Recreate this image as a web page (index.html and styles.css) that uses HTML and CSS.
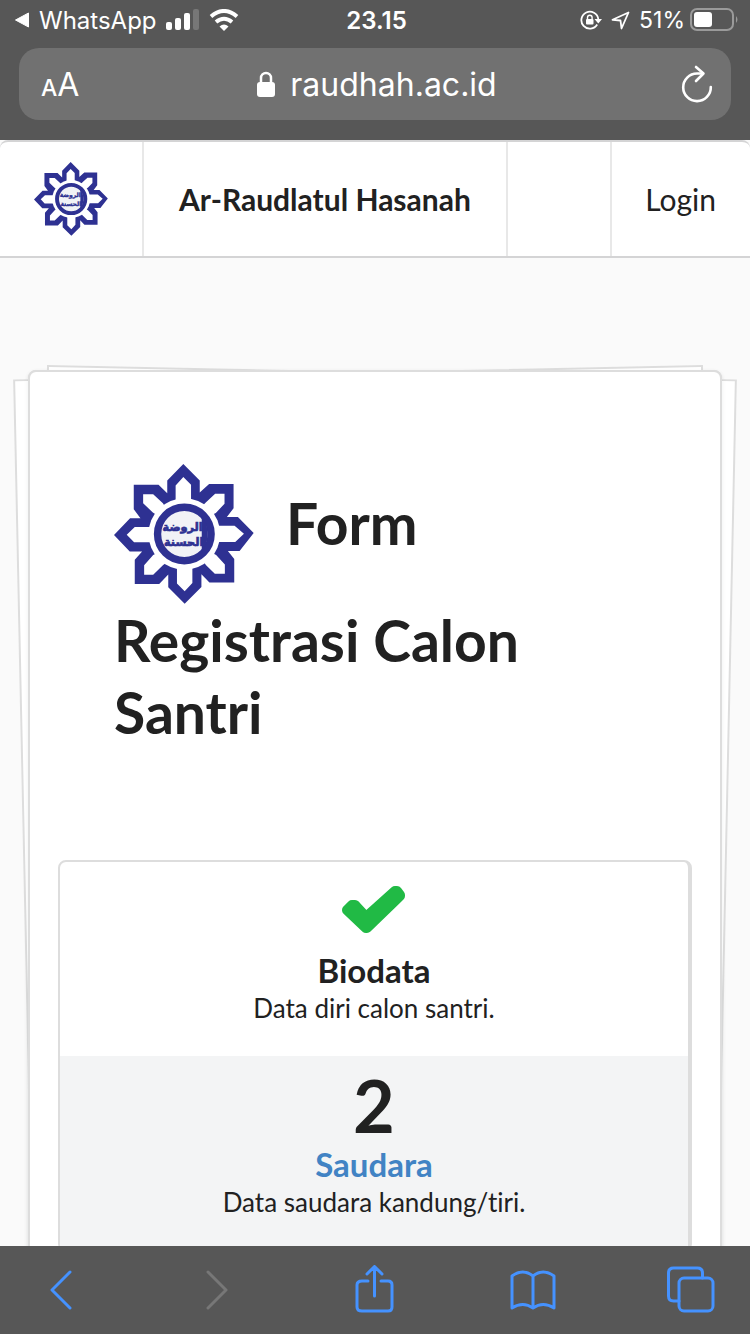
FILE: index.html
```html
<!DOCTYPE html>
<html lang="id">
<head>
<meta charset="utf-8">
<meta name="viewport" content="width=device-width, initial-scale=1">
<title>Ar-Raudlatul Hasanah</title>
<link rel="stylesheet" href="styles.css">
</head>
<body>
<svg class="defs" aria-hidden="true">
  <symbol id="emblem" viewBox="28 28 418 418">
    <path fill="#2e3192" d="M235 28L284 77V113L312 88H385V160L365 186H398L445 234L403 288H368L387 312V382H313L289 357V395L239 445L190 396V358L163 386H90V314L112 289H75L28 240L76 190H107L87 163V90H161L187 115V77Z"/>
    <g fill="#fff">
      <circle cx="238" cy="237" r="107"/>
      <path d="M235 67L258 90V150H212V92ZM302 143L330 117H358V147L332 174L300 190L280 165ZM330 212H388L416 236L390 261H330ZM333 300L359 328V356H329L303 330L280 300L305 285ZM262 330V383L239 408L216 385V330ZM174 330L145 359H118V330L145 300L175 285L200 310ZM150 262H88L66 239L90 216H150ZM144 173L115 145V118H145L174 145L190 170L170 190Z"/>
    </g>
    <circle cx="238" cy="237" r="80" fill="#f1f2f6" stroke="#2e3192" stroke-width="22"/>
    <path fill="#2e3192" d="M290 180Q326 237 290 294Z"/>
    <g class="emblem-text" fill="#2e3192" stroke="#2e3192" stroke-width="2" text-anchor="middle">
      <text x="233" y="228">الروضة</text>
      <text x="236" y="274">الحسنة</text>
    </g>
  </symbol>
</svg>

<header class="browser-top">
  <div class="status">
    <div class="status-side">
      <svg width="16" height="16" viewBox="0 0 16 16"><path d="M1.500 8L14.500 1V15Z" fill="#fff" stroke="#fff" stroke-linejoin="round"/></svg>
      <span>WhatsApp</span>
      <svg class="signal" width="34" height="22" viewBox="0 0 34 22" fill="#fff"><rect y="13" width="6" height="8" rx="2"/><rect x="9" y="9" width="6" height="12" rx="2"/><rect x="18" y="4" width="6" height="17" rx="2"/><rect x="27" width="6" height="21" rx="2" fill="#777"/></svg>
      <svg width="30" height="22" viewBox="0 0 30 22" fill="none" stroke="#fff" stroke-width="4"><path d="M2 7.500Q15-3.500 28 7.500"/><path d="M7 13Q15 6.500 23 13"/><path d="M15 22L10.500 17.500Q15 13.500 19.500 17.500Z" fill="#fff" stroke="none"/></svg>
    </div>
    <time class="clock">23.15</time>
    <div class="status-side status-right">
      <svg width="22" height="20" viewBox="0 0 22 20" fill="none" stroke="#fff" stroke-width="1.800"><path d="M17.200 14.500A8.500 8.500 0 1 1 18.300 9"/><path d="M14.500 9H22L18.300 13.500Z" fill="#fff" stroke="none"/><path d="M7.500 9V7.500a2.300 2.300 0 0 1 4.600 0V9" stroke-width="1.400"/><rect x="6" y="9" width="7.500" height="5.500" rx="1" fill="#fff" stroke="none"/></svg>
      <svg class="locate" width="19" height="19" viewBox="0 0 19 19" fill="none" stroke="#fff" stroke-width="1.800" stroke-linejoin="round"><path d="M17.500 1.500L1.500 8.800L9.500 9.500L10.500 17.500Z"/></svg>
      <span>51%</span>
      <svg width="49" height="24" viewBox="0 0 49 24"><rect x="1" y="1" width="42" height="21" rx="6" fill="none" stroke="#9a9a9a" stroke-width="2"/><rect x="4" y="4" width="18" height="15" rx="3" fill="#fff"/><path d="M46 8Q49 11.500 46 15Z" fill="#9a9a9a"/></svg>
    </div>
  </div>
  <div class="address">
    <button class="plain text-size" aria-label="Ukuran teks"><small>A</small>A</button>
    <div class="host">
      <svg width="18" height="26" viewBox="0 0 18 26"><path d="M4 12V7a5 5 0 0 1 10 0V12" fill="none" stroke="#fff" stroke-width="2.500"/><rect y="11" width="18" height="15" rx="3" fill="#fff"/></svg>
      <span>raudhah.ac.id</span>
    </div>
    <button class="plain reload" aria-label="Muat ulang"><svg width="32" height="38" viewBox="0 0 32 38" fill="none" stroke="#fff" stroke-width="2.600" stroke-linecap="round" stroke-linejoin="round"><path d="M21.500 8.500H16A13.800 13.800 0 1 0 29.800 22"/><path d="M15 2L22.500 8.500L15 16"/></svg></button>
  </div>
</header>

<main class="page">
  <nav class="menu">
    <a class="menu-item menu-logo" href="#" aria-label="Beranda"><svg width="74" height="74"><use href="#emblem"/></svg></a>
    <a class="menu-item menu-name" href="#">Ar-Raudlatul Hasanah</a>
    <span class="menu-item menu-blank"></span>
    <a class="menu-item menu-login" href="#">Login</a>
  </nav>
  <section class="card">
    <h1 class="title"><svg class="title-logo" width="140" height="140"><use href="#emblem"/></svg>Form Registrasi Calon Santri</h1>
    <div class="steps">
      <a class="step" href="#">
        <svg class="check" width="64" height="48" viewBox="0 0 64 48"><path d="M5 24L10 19H13L24 31L53 5H55L58 9V10L25 42H24Z" fill="#21ba45" stroke="#21ba45" stroke-width="10" stroke-linejoin="round"/></svg>
        <span class="step-name">Biodata</span>
        <span class="step-note">Data diri calon santri.</span>
      </a>
      <a class="step step-active" href="#">
        <span class="step-number">2</span>
        <span class="step-name">Saudara</span>
        <span class="step-note">Data saudara kandung/tiri.</span>
      </a>
    </div>
  </section>
</main>

<footer class="toolbar">
  <button class="plain" aria-label="Kembali"><svg width="48" height="48" viewBox="0 0 48 48"><path d="M35 7L17 25L35 43"/></svg></button>
  <button class="plain" aria-label="Maju" disabled><svg width="48" height="48" viewBox="0 0 48 48"><path d="M15 7L33 25L15 43"/></svg></button>
  <button class="plain" aria-label="Bagikan"><svg width="48" height="48" viewBox="0 0 48 48"><path d="M17 16H11Q6 16 6 20V42Q6 46 11 46H37Q41 46 41 42V20Q41 16 37 16H30M23.500 31V2M16 9L23.500 1.500L31 9"/></svg></button>
  <button class="plain" aria-label="Bookmark"><svg width="48" height="48" viewBox="0 0 48 48"><path d="M24 11Q14 3 3 11V43Q14 36 24 43Q34 36 45 43V11Q34 3 24 11V43"/></svg></button>
  <button class="plain" aria-label="Tab"><svg width="48" height="48" viewBox="0 0 48 48"><rect x="12" y="13" width="34" height="33" rx="5"/><path d="M35.500 13V8Q35.500 3 30.500 3H6.500Q1.500 3 1.500 8V31Q1.500 36 6.500 36H12"/></svg></button>
</footer>
</body>
</html>
```
FILE: styles.css
```css
* { box-sizing: border-box; }

body {
  margin: 0;
  height: 100vh;
  display: flex;
  flex-direction: column;
  background: #575757;
  color: #212121;
  font-family: Lato, "Open Sans", sans-serif;
  font-variant-ligatures: none;
}

a { color: inherit; text-decoration: none; }
svg { flex: none; }
.defs { position: absolute; width: 0; height: 0; }
.emblem-text { font: bold 34px "DejaVu Sans", sans-serif; }

.plain {
  padding: 0;
  border: 0;
  background: none;
  color: inherit;
  font: inherit;
  display: flex;
  align-items: center;
}

/* Browser bars */
.browser-top {
  flex: none;
  padding-bottom: 20px;
  color: #fff;
  font-family: Inter, Roboto, sans-serif;
}
.status {
  height: 48px;
  padding: 0 11px 8px 14px;
  display: grid;
  grid-template-columns: 1fr auto 1fr;
  align-items: center;
  font-size: 24px;
}
.status-side { display: flex; align-items: center; gap: 9px; }
.status-right { justify-content: flex-end; gap: 5px; font-size: 23px; }
.locate { margin: 0 4px; }
.clock { font-weight: 600; }
.address {
  height: 72px;
  margin: 0 19px;
  padding: 0 18px 0 22px;
  display: grid;
  grid-template-columns: 1fr auto 1fr;
  align-items: center;
  border-radius: 20px;
  background: #717171;
}
.text-size { font-size: 32px; align-items: baseline; }
.text-size small { font-size: 23px; font-weight: 500; }
.host { display: flex; align-items: center; gap: 15px; font-size: 32px; }
.reload { justify-self: end; }

/* Site page */
.page {
  flex: 1;
  min-height: 0;
  overflow-x: hidden;
  overflow-y: auto;
  scrollbar-width: none;
  background: #fafafa;
}
.menu {
  height: 118px;
  display: flex;
  border: solid #d4d4d5;
  border-width: 2px 0;
  border-radius: 8px 8px 0 0;
  background: #fff;
  font-size: 30px;
}
.menu-item {
  display: flex;
  align-items: center;
  justify-content: center;
  border-right: 2px solid #e8e8e8;
}
.menu-logo { padding: 0 34px; }
.menu-name { padding: 0 35px; font-weight: bold; white-space: nowrap; }
.menu-blank { flex: 1; }
.menu-login { padding: 0 34px 0 33px; border: 0; }

.card {
  position: relative;
  isolation: isolate;
  margin: 112px 28px 28px;
  padding: 84px 28px 364px;
  border: 2px solid #dddddd;
  border-radius: 8px;
  box-shadow: 0 2px 4px #22242614;
}
/* Tilted sheets, with a plain face over them for the card itself */
.card::before,
.card::after,
.steps::before {
  content: "";
  position: absolute;
  inset: 0;
  z-index: -2;
  background: #fff;
}
.card::before,
.card::after {
  border: 2px solid #dddddd;
  transform-origin: 50% 810px;
}
.card::before { transform: rotate(-1.2deg); }
.card::after { transform: rotate(1.2deg); }
.steps::before {
  z-index: -1;
  border-radius: 6px;
  box-shadow: 0 0 0 2px #dddddd, 0 2px 6px #22242620;
}

.title {
  margin: 0 56px 112px;
  font-size: 57px;
  line-height: 72px;
  font-weight: bold;
}
.title-logo { margin: 8px 32px 0 0; vertical-align: middle; }

.steps {
  border: 2px solid #dddddd;
  border-right-width: 4px;
  border-radius: 8px;
  overflow: clip;
}
.step {
  padding: 24px 56px 30px;
  display: flex;
  flex-direction: column;
  align-items: center;
  text-align: center;
}
.step-active { padding-top: 10px; background: #f3f4f5; }
.check { margin-bottom: 16px; }
.step-number { font-size: 72px; line-height: 78px; font-weight: bold; }
.step-name { font-size: 33px; line-height: 40px; font-weight: bold; }
.step-note { font-size: 26px; line-height: 36px; }
.step-active .step-name { color: #4183c4; }

.toolbar {
  flex: none;
  height: 88px;
  padding: 0 35px 2px;
  display: flex;
  justify-content: space-between;
  align-items: center;
}
.toolbar svg {
  fill: none;
  stroke: #4592ff;
  stroke-width: 3;
  stroke-linecap: round;
  stroke-linejoin: round;
}
.toolbar button:disabled svg { stroke: #777; }
```
